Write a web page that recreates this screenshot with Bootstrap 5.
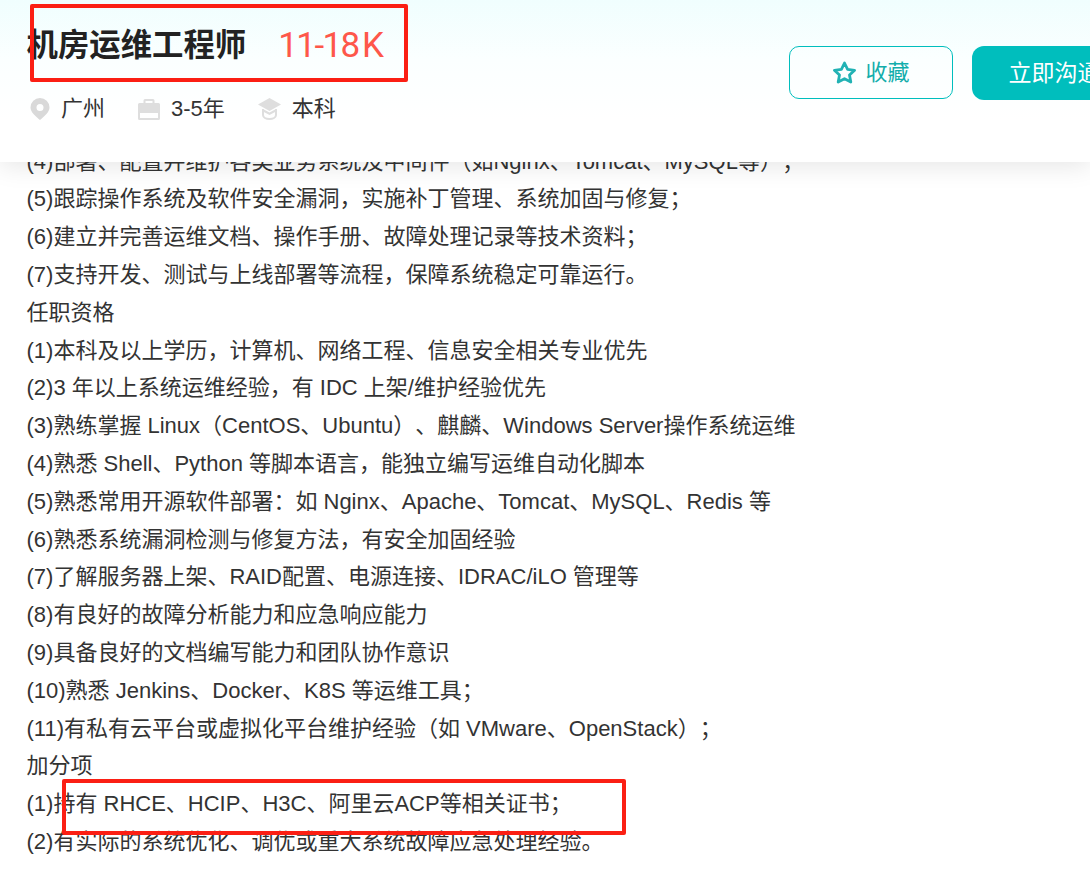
<!DOCTYPE html>
<html lang="zh">
<head>
<meta charset="utf-8">
<link href="https://cdn.jsdelivr.net/npm/bootstrap@5.3.0/dist/css/bootstrap.min.css" rel="stylesheet">
<style>
html,body{height:875px;overflow:hidden;background:#fff;}
body{font-family:"Liberation Sans","Noto Sans CJK SC",sans-serif;color:#333;position:relative;text-spacing-trim:space-all;}
.job-body{padding:142.600px 0 0 26.500px;font-size:22px;line-height:37.800px;color:#333;white-space:nowrap;}
.job-body p{margin:0;}
.job-head{position:absolute;left:0;top:0;width:1090px;height:162px;background:linear-gradient(180deg,#f0fefe 0,#fbffff 60px,#fff 120px);box-shadow:0 4px 24px rgba(0,0,0,.1);}
.job-title{font-size:31.400px;font-weight:700;color:#222;line-height:40px;}
.job-pay{font-family:Roboto,"Liberation Sans",sans-serif;font-size:35px;font-weight:400;color:#fe574a;line-height:40px;margin-left:32px;letter-spacing:-1.600px;}
.pay-unit{margin-left:3.500px;}
.title-row{padding:26px 0 0 26.500px;}
.meta-row{padding:28px 0 0 30px;font-size:22px;line-height:30px;color:#333;gap:33px;}
.meta-item{gap:11px;}
.act-row{position:absolute;left:789px;top:46px;gap:19px;}
.btn-fav{width:164px;height:53px;border:1px solid #00bebd;border-radius:10px;background:transparent;color:#12adab;font-size:22px;padding:0;}
.btn-fav:hover{color:#12adab;border-color:#00bebd;}
.btn-chat{width:170px;height:54px;border:0;border-radius:12px;background:#00bebd;color:#fff;font-size:23px;padding:0 0 0 36.500px;text-align:left;white-space:nowrap;}
.mark-box{position:absolute;border:4px solid #fb1f14;border-radius:2px;pointer-events:none;}
.mark-a{left:30px;top:4px;width:378px;height:78px;}
.mark-b{left:62px;top:779px;width:564px;height:56px;}
</style>
</head>
<body>
<main class="job-body">
<p>(4)部署、配置并维护各类业务系统及中间件（如Nginx、Tomcat、MySQL等）；</p>
<p>(5)跟踪操作系统及软件安全漏洞，实施补丁管理、系统加固与修复；</p>
<p>(6)建立并完善运维文档、操作手册、故障处理记录等技术资料；</p>
<p>(7)支持开发、测试与上线部署等流程，保障系统稳定可靠运行。</p>
<p>任职资格</p>
<p>(1)本科及以上学历，计算机、网络工程、信息安全相关专业优先</p>
<p>(2)3 年以上系统运维经验，有 IDC 上架/维护经验优先</p>
<p>(3)熟练掌握 Linux（CentOS、Ubuntu）、麒麟、Windows Server操作系统运维</p>
<p>(4)熟悉 Shell、Python 等脚本语言，能独立编写运维自动化脚本</p>
<p>(5)熟悉常用开源软件部署：如 Nginx、Apache、Tomcat、MySQL、Redis 等</p>
<p>(6)熟悉系统漏洞检测与修复方法，有安全加固经验</p>
<p>(7)了解服务器上架、RAID配置、电源连接、IDRAC/iLO 管理等</p>
<p>(8)有良好的故障分析能力和应急响应能力</p>
<p>(9)具备良好的文档编写能力和团队协作意识</p>
<p>(10)熟悉 Jenkins、Docker、K8S 等运维工具；</p>
<p>(11)有私有云平台或虚拟化平台维护经验（如 VMware、OpenStack）；</p>
<p>加分项</p>
<p>(1)持有 RHCE、HCIP、H3C、阿里云ACP等相关证书；</p>
<p>(2)有实际的系统优化、调优或重大系统故障应急处理经验。</p>
</main>
<header class="job-head">
  <div class="title-row d-flex align-items-center">
    <span class="job-title">机房运维工程师</span>
    <span class="job-pay">11-18<span class="pay-unit">K</span></span>
  </div>
  <div class="meta-row d-flex align-items-center">
    <span class="meta-item d-flex align-items-center">
      <svg width="20" height="22" viewBox="0 0 20 22"><path fill="#d9d9d9" fill-rule="evenodd" d="M10 0a9.500 9.500 0 0 0-9.500 9.500c0 5 5.500 9 9.500 12.500 4-3.500 9.500-7.500 9.500-12.500A9.500 9.500 0 0 0 10 0zm0 6a3.500 3.500 0 1 1 0 7 3.500 3.500 0 0 1 0-7z"/></svg>
      广州</span>
    <span class="meta-item d-flex align-items-center">
      <svg width="22" height="21" viewBox="0 0 22 21"><path fill="#dedede" fill-rule="evenodd" d="M7 0h8a1.500 1.500 0 0 1 1.500 1.500V4h4A1.500 1.500 0 0 1 22 5.500v14a1.500 1.500 0 0 1-1.500 1.500h-19A1.500 1.500 0 0 1 0 19.500v-14A1.500 1.500 0 0 1 1.500 4h4V1.500A1.500 1.500 0 0 1 7 0zm.5 2v2h7V2zM2 14v5h18v-5z"/></svg>
      3-5年</span>
    <span class="meta-item d-flex align-items-center">
      <svg width="23" height="22" viewBox="0 0 23 22"><path fill="#dedede" d="M11.500 0 23 6.500 11.500 13 0 6.500z"/><path fill="none" stroke="#dedede" stroke-width="2" d="M5 11v6c0 2.500 3 4 6.500 4s6.500-1.500 6.500-4v-6"/><path fill="#dedede" d="M5 11l6.500 3.600L18 11v2.500l-6.500 3.500L5 13.500z"/></svg>
      本科</span>
  </div>
  <div class="act-row d-flex align-items-start">
    <button type="button" class="btn btn-fav d-flex align-items-center justify-content-center gap-2">
      <svg width="25" height="24" viewBox="0 0 25 24"><path fill="none" stroke="#21b2b4" stroke-width="2.800" stroke-linejoin="round" d="M12.500 2l3.100 6.300 7 1-5.100 4.800 1.300 6.900-6.300-3.300-6.300 3.300 1.300-6.900-5.100-4.800 7-1z"/></svg>
      收藏</button>
    <button type="button" class="btn btn-chat">立即沟通</button>
  </div>
</header>
<div class="mark-box mark-a"></div>
<div class="mark-box mark-b"></div>
<script src="https://cdn.jsdelivr.net/npm/bootstrap@5.3.0/dist/js/bootstrap.bundle.min.js"></script>
</body>
</html>
